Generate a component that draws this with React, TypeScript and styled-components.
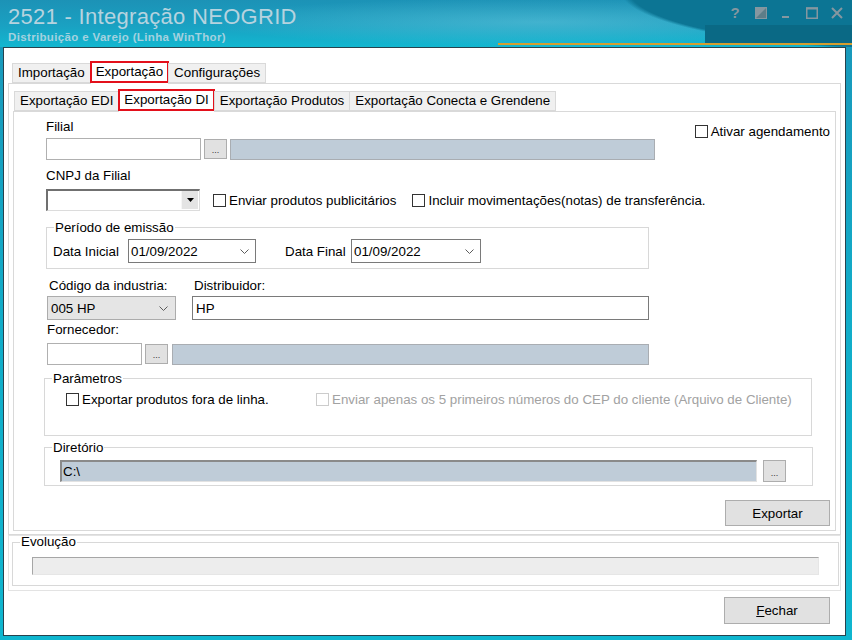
import React from "react";
import styled, { createGlobalStyle } from "styled-components";

const GlobalStyle = createGlobalStyle`
  html, body { margin: 0; padding: 0; background: #14a6c4; }
  body {
    font-family: "Liberation Sans", Arial, sans-serif;
    font-size: 13.33px;
    line-height: 15px;
    color: #000;
  }
  *, *::before, *::after { box-sizing: border-box; }
`;

/* ---------- window frame ---------- */

const Window = styled.div`
  width: 852px;
  height: 640px;
  overflow: hidden;
  display: flex;
  flex-direction: column;
  background: linear-gradient(180deg, #1a96b9 0%, #12adc9 50%, #0fb6cf 100%);
`;

const TitleBar = styled.header`
  height: 47px;
  flex: none;
  display: flex;
  flex-direction: column;
  padding-bottom: 2px;
  background:
    radial-gradient(ellipse 300px 60px at 920px -10px, #0c7594 97%, rgba(12, 117, 148, 0) 100%),
    radial-gradient(ellipse 340px 24px at 540px 22px, rgba(140, 215, 232, 0.35), rgba(140, 215, 232, 0) 100%),
    linear-gradient(180deg, #1c92b6 0%, #1aa1c2 55%, #12b7d0 100%);
`;

const TitleTop = styled.div`
  height: 43px;
  display: flex;
  justify-content: space-between;
`;

const TitleText = styled.div`
  padding: 4px 0 0 8px;
  display: flex;
  flex-direction: column;
`;

const AppTitle = styled.h1`
  margin: 0;
  font-size: 22px;
  line-height: 26px;
  font-weight: normal;
  letter-spacing: 0.3px;
  color: #b6d3df;
  white-space: nowrap;
`;

const AppSubtitle = styled.div`
  margin-top: 1px;
  font-size: 11.5px;
  line-height: 13px;
  font-weight: bold;
  letter-spacing: 0.35px;
  color: #a4d1df;
  white-space: nowrap;
`;

const TitleRight = styled.div`
  width: 147px;
  display: flex;
  flex-direction: column;
`;

const Controls = styled.div`
  height: 25px;
  display: flex;
  align-items: center;
  padding-left: 22px;
  gap: 9.5px;
`;

const CtrlSlot = styled.div`
  width: 16px;
  height: 16px;
  display: flex;
  align-items: center;
  justify-content: center;
  color: #8597a0;
`;

const HelpGlyph = styled.span`
  font-size: 15px;
  line-height: 16px;
  font-weight: bold;
  color: #8597a0;
`;

const DarkStrip = styled.div`
  flex: 1;
  background: #0a6985;
`;

const Accent = styled.div`
  height: 2px;
  margin-left: 498px;
  background: #d49e2f;
`;

const Client = styled.main`
  flex: 1;
  margin: 0 6px 4px 3px;
  background: #fff;
  border: 1px solid #27424d;
  display: flex;
  flex-direction: column;
  padding: 13px 4px 10px 4px;
`;

/* ---------- tabs ---------- */

const TabStrip = styled.div<{ $indent: number }>`
  display: flex;
  align-items: flex-end;
  height: 22px;
  padding-left: ${(p) => p.$indent}px;
  position: relative;
  z-index: 1;
  flex: none;
`;

const Tab = styled.div<{ $active?: boolean; $marked?: boolean }>`
  position: relative;
  height: ${(p) => (p.$active ? 23 : 20)}px;
  margin-bottom: ${(p) => (p.$active ? -1 : 0)}px;
  margin-left: -1px;
  padding: 0 5px;
  line-height: ${(p) => (p.$active ? 19 : 18)}px;
  background: ${(p) => (p.$active ? "#fff" : "#f0f0f0")};
  border: 1px solid #d9d9d9;
  border-bottom: ${(p) => (p.$active ? "none" : "1px solid #d9d9d9")};
  white-space: nowrap;
  &:first-child { margin-left: 0; }
  ${(p) =>
    p.$marked
      ? `&::after {
          content: "";
          position: absolute;
          left: -1px; right: -1px; top: -1px; bottom: 1px;
          border: 2px solid #e3101b;
        }`
      : ""}
`;

const OuterPanel = styled.section`
  border: 1px solid #d9d9d9;
  background: #fff;
  padding: 5px 4px 3px 4px;
  display: flex;
  flex-direction: column;
`;

const InnerPanel = styled.div`
  border: 1px solid #d9d9d9;
  background: #fff;
  padding: 7px 5px 4px 32px;
  display: flex;
  flex-direction: column;
  align-items: flex-start;
`;

/* ---------- form parts ---------- */

const TopRow = styled.div`
  align-self: stretch;
  display: flex;
  justify-content: space-between;
  align-items: flex-start;
`;

const Stack = styled.div`
  display: flex;
  flex-direction: column;
`;

const Label = styled.div<{ $mt?: number; $ml?: number }>`
  margin-top: ${(p) => p.$mt ?? 0}px;
  margin-left: ${(p) => p.$ml ?? 0}px;
  white-space: nowrap;
`;

const FieldRow = styled.div<{ $mt?: number; $ml?: number }>`
  display: flex;
  align-items: center;
  margin-top: ${(p) => p.$mt ?? 0}px;
  margin-left: ${(p) => p.$ml ?? 0}px;
`;

const TextBox = styled.div<{ $w: number }>`
  width: ${(p) => p.$w}px;
  height: 22px;
  background: #fff;
  border: 1px solid #b0b0b0;
`;

const LookupBox = styled.div<{ $w: number; $ml?: number }>`
  width: ${(p) => p.$w}px;
  height: 21px;
  margin-left: ${(p) => p.$ml ?? 0}px;
  background: #bfccd8;
  border: 1px solid #a9adb2;
`;

const DotsButton = styled.div<{ $ml?: number; $h?: number }>`
  width: 23px;
  height: ${(p) => p.$h ?? 20}px;
  margin-left: ${(p) => p.$ml ?? 0}px;
  background: #e1e1e1;
  border: 1px solid #adadad;
  display: flex;
  align-items: flex-end;
  justify-content: center;
  padding-bottom: 3px;
  font-size: 9px;
  line-height: 9px;
  color: #333;
`;

const DropCombo = styled.div`
  width: 154px;
  height: 22px;
  background: #fff;
  border-top: 2px solid #707070;
  border-left: 2px solid #707070;
  border-right: 1px solid #dcdcdc;
  border-bottom: 1px solid #dcdcdc;
  display: flex;
  justify-content: flex-end;
  padding: 0 1px 1px 0;
`;

const DropButton = styled.div`
  width: 17px;
  background: #e4e4e4;
  border-left: 1px solid #f6f6f6;
  display: flex;
  align-items: center;
  justify-content: center;
`;

const CheckItem = styled.div<{ $mt?: number; $ml?: number; $w?: number; $disabled?: boolean }>`
  display: flex;
  align-items: center;
  gap: 3px;
  margin-top: ${(p) => p.$mt ?? 0}px;
  margin-left: ${(p) => p.$ml ?? 0}px;
  width: ${(p) => (p.$w ? `${p.$w}px` : "auto")};
  color: ${(p) => (p.$disabled ? "#a2a2a2" : "#000")};
  white-space: nowrap;
  flex: none;
`;

const Box = styled.span<{ $disabled?: boolean }>`
  width: 13px;
  height: 13px;
  flex: none;
  background: #fff;
  border: 1px solid ${(p) => (p.$disabled ? "#cccccc" : "#333333")};
`;

const GroupBox = styled.fieldset<{ $w?: number; $mt?: number; $ml?: number; $pt: number; $pb: number }>`
  margin: ${(p) => p.$mt ?? 0}px 0 0 ${(p) => p.$ml ?? 0}px;
  width: ${(p) => (p.$w ? `${p.$w}px` : "auto")};
  min-width: 0;
  padding: ${(p) => p.$pt}px 0 ${(p) => p.$pb}px 0;
  border: 1px solid #d8d8d8;
`;

const Legend = styled.legend<{ $lh?: number }>`
  margin-left: 7px;
  padding: 0 1px;
  line-height: ${(p) => p.$lh ?? 15}px;
  white-space: nowrap;
`;

const GroupBody = styled.div<{ $pl: number; $pr?: number }>`
  padding: 0 ${(p) => p.$pr ?? 0}px 0 ${(p) => p.$pl}px;
`;

const InlineLabel = styled.div<{ $w: number; $ml?: number }>`
  width: ${(p) => p.$w}px;
  margin-left: ${(p) => p.$ml ?? 0}px;
  white-space: nowrap;
  flex: none;
`;

const DateBox = styled.div<{ $w: number }>`
  width: ${(p) => p.$w}px;
  height: 24px;
  background: #fff;
  border: 1px solid #7a7a7a;
  display: flex;
  align-items: center;
  justify-content: space-between;
  padding: 0 6px 0 2px;
`;

const PairGrid = styled.div<{ $mt?: number }>`
  display: grid;
  grid-template-columns: 129px 457px;
  column-gap: 16px;
  margin: ${(p) => p.$mt ?? 0}px 0 0 1px;
`;

const GridLabel = styled.div`
  padding-left: 2px;
  white-space: nowrap;
`;

const SelectBox = styled.div`
  height: 24px;
  background: #e5e5e5;
  border: 1px solid #acacac;
  display: flex;
  align-items: center;
  justify-content: space-between;
  padding: 0 7px 0 3px;
`;

const EditBox = styled.div`
  height: 24px;
  background: #fff;
  border: 1px solid #7a7a7a;
  display: flex;
  align-items: center;
  padding-left: 3px;
`;

const DirBox = styled.div`
  width: 697px;
  height: 22px;
  background: #bfccd8;
  border-top: 2px solid #8a8a8a;
  border-left: 2px solid #8a8a8a;
  border-right: 1px solid #e2e2e2;
  border-bottom: 1px solid #e2e2e2;
  display: flex;
  align-items: center;
  padding-left: 1px;
`;

const ActionButton = styled.button<{ $mt?: number; $mr?: number; $w: number; $h: number }>`
  align-self: flex-end;
  margin-top: ${(p) => p.$mt ?? 0}px;
  margin-right: ${(p) => p.$mr ?? 0}px;
  width: ${(p) => p.$w}px;
  height: ${(p) => p.$h}px;
  flex: none;
  background: #e1e1e1;
  border: 1px solid #adadad;
  border-radius: 0;
  font-family: inherit;
  font-size: 13.33px;
  line-height: 15px;
  color: #000;
  padding: 0;
`;

const StatusPanel = styled.div`
  border: 1px solid #e3e3e3;
  padding: 0 1px 4px 3px;
  flex: none;
`;

const ProgressTrack = styled.div`
  height: 18px;
  background: #ededed;
  border-top: 1px solid #a6a6a6;
  border-left: 1px solid #a6a6a6;
  border-right: 1px solid #e6e6e6;
  border-bottom: 1px solid #e6e6e6;
`;

/* ---------- icons ---------- */

const Chevron = () => (
  <svg width="9" height="5" viewBox="0 0 9 5">
    <polyline points="0.5,0.5 4.5,4.5 8.5,0.5" fill="none" stroke="#5c5c5c" strokeWidth="1" />
  </svg>
);

const BlackTriangle = () => (
  <svg width="7" height="4" viewBox="0 0 7 4">
    <polygon points="0,0 7,0 3.5,4" fill="#000" />
  </svg>
);

export default function App() {
  return (
    <>
      <GlobalStyle />
      <Window>
        <TitleBar>
          <TitleTop>
            <TitleText>
              <AppTitle>2521 - Integração NEOGRID</AppTitle>
              <AppSubtitle>Distribuição e Varejo (Linha WinThor)</AppSubtitle>
            </TitleText>
            <TitleRight>
              <Controls>
                <CtrlSlot>
                  <HelpGlyph>?</HelpGlyph>
                </CtrlSlot>
                <CtrlSlot>
                  <svg width="12" height="12" viewBox="0 0 12 12">
                    <rect x="0.5" y="0.5" width="11" height="11" fill="#5e7d88" stroke="#8597a0" />
                    <polygon points="1,1 11,1 1,11" fill="#8597a0" />
                  </svg>
                </CtrlSlot>
                <CtrlSlot>
                  <svg width="10" height="12" viewBox="0 0 10 12">
                    <rect x="1" y="9" width="7" height="2" fill="#8597a0" />
                  </svg>
                </CtrlSlot>
                <CtrlSlot>
                  <svg width="12" height="12" viewBox="0 0 12 12">
                    <rect x="0.75" y="1" width="10.5" height="10.25" fill="none" stroke="#8597a0" strokeWidth="1.5" />
                    <rect x="0" y="0.5" width="12" height="2" fill="#8597a0" />
                  </svg>
                </CtrlSlot>
                <CtrlSlot>
                  <svg width="12" height="12" viewBox="0 0 12 12">
                    <path d="M1 1 L11 11 M11 1 L1 11" stroke="#8597a0" strokeWidth="2" />
                  </svg>
                </CtrlSlot>
              </Controls>
              <DarkStrip />
            </TitleRight>
          </TitleTop>
          <Accent />
        </TitleBar>

        <Client>
          <TabStrip $indent={4}>
            <Tab>Importação</Tab>
            <Tab $active $marked>
              Exportação
            </Tab>
            <Tab>Configurações</Tab>
          </TabStrip>
          <OuterPanel>
            <TabStrip $indent={1}>
              <Tab>Exportação EDI</Tab>
              <Tab $active $marked>
                Exportação DI
              </Tab>
              <Tab>Exportação Produtos</Tab>
              <Tab>Exportação Conecta e Grendene</Tab>
            </TabStrip>
            <InnerPanel>
              <TopRow>
                <Stack>
                  <Label>Filial</Label>
                  <FieldRow $mt={4}>
                    <TextBox $w={155} />
                    <DotsButton $ml={3}>...</DotsButton>
                    <LookupBox $w={425} $ml={3} />
                  </FieldRow>
                </Stack>
                <CheckItem $mt={5}>
                  <Box />
                  Ativar agendamento
                </CheckItem>
              </TopRow>

              <Label $mt={8}>CNPJ da Filial</Label>
              <FieldRow $mt={6}>
                <DropCombo>
                  <DropButton>
                    <BlackTriangle />
                  </DropButton>
                </DropCombo>
                <CheckItem $ml={13}>
                  <Box />
                  Enviar produtos publicitários
                </CheckItem>
                <CheckItem $ml={16}>
                  <Box />
                  Incluir movimentações(notas) de transferência.
                </CheckItem>
              </FieldRow>

              <GroupBox $w={603} $mt={9} $pt={4} $pb={5}>
                <Legend>Período de emissão</Legend>
                <GroupBody $pl={6}>
                  <FieldRow>
                    <InlineLabel $w={75}>Data Inicial</InlineLabel>
                    <DateBox $w={128}>
                      <span>01/09/2022</span>
                      <Chevron />
                    </DateBox>
                    <InlineLabel $w={66} $ml={29}>
                      Data Final
                    </InlineLabel>
                    <DateBox $w={130}>
                      <span>01/09/2022</span>
                      <Chevron />
                    </DateBox>
                  </FieldRow>
                </GroupBody>
              </GroupBox>

              <PairGrid $mt={9}>
                <GridLabel>Código da industria:</GridLabel>
                <GridLabel>Distribuidor:</GridLabel>
              </PairGrid>
              <PairGrid $mt={3}>
                <SelectBox>
                  <span>005 HP</span>
                  <Chevron />
                </SelectBox>
                <EditBox>HP</EditBox>
              </PairGrid>

              <Label $mt={2} $ml={1}>
                Fornecedor:
              </Label>
              <FieldRow $mt={6} $ml={1}>
                <TextBox $w={95} />
                <DotsButton $ml={3}>...</DotsButton>
                <LookupBox $w={477} $ml={4} />
              </FieldRow>

              <GroupBox $w={768} $mt={6} $ml={-2} $pt={6} $pb={28}>
                <Legend>Parâmetros</Legend>
                <GroupBody $pl={21}>
                  <FieldRow>
                    <CheckItem $w={250}>
                      <Box />
                      Exportar produtos fora de linha.
                    </CheckItem>
                    <CheckItem $disabled>
                      <Box $disabled />
                      Enviar apenas os 5 primeiros números do CEP do cliente (Arquivo de Cliente)
                    </CheckItem>
                  </FieldRow>
                </GroupBody>
              </GroupBox>

              <GroupBox $w={769} $mt={4} $ml={-2} $pt={5} $pb={3}>
                <Legend>Diretório</Legend>
                <GroupBody $pl={15}>
                  <FieldRow>
                    <DirBox>C:\</DirBox>
                    <DotsButton $ml={6} $h={22}>
                      ...
                    </DotsButton>
                  </FieldRow>
                </GroupBody>
              </GroupBox>

              <ActionButton $mt={14} $w={105} $h={26}>
                Exportar
              </ActionButton>
            </InnerPanel>
          </OuterPanel>

          <StatusPanel>
            <GroupBox $pt={9} $pb={10}>
              <Legend $lh={12}>Evolução</Legend>
              <GroupBody $pl={19} $pr={19}>
                <ProgressTrack />
              </GroupBody>
            </GroupBox>
          </StatusPanel>

          <ActionButton $mt={6} $mr={11} $w={106} $h={27}>
            <u>F</u>echar
          </ActionButton>
        </Client>
      </Window>
    </>
  );
}
